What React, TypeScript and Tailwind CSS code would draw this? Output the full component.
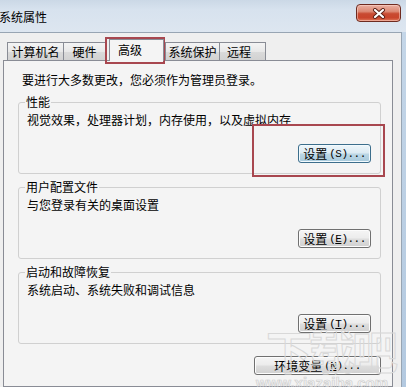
import React from "react";

function WinButton({
  className,
  primary,
  children,
}: {
  className: string;
  primary?: boolean;
  children: React.ReactNode;
}) {
  const base =
    "h-[19px] rounded-[3px] border flex items-center justify-center text-[12px] leading-[16px] text-black";
  const skin = primary
    ? "border-[#3c6e8c] bg-[linear-gradient(#eef6fa_0%,#dbeaf2_48%,#bcd7e5_52%,#a8cadc_100%)] shadow-[inset_0_0_0_1px_#f2fafe]"
    : "border-[#707070] bg-[linear-gradient(#f5f5f5_0%,#ececec_48%,#dedede_52%,#d0d0d0_100%)] shadow-[inset_0_0_0_1px_#fcfcfc]";
  return <div className={`${base} ${skin} ${className}`}>{children}</div>;
}

function Acc({ text, letter, underline }: { text: string; letter: string; underline?: boolean }) {
  return (
    <span className="flex items-center">
      <span>{text}</span>
      <span className="ml-[2px] font-['Liberation_Mono',monospace] text-[11px] tracking-[-0.5px]">
        (
        {underline ? <u>{letter}</u> : letter}
        )...
      </span>
    </span>
  );
}

function Group({
  title,
  desc,
  className,
  children,
}: {
  title: string;
  desc: string;
  className?: string;
  children: React.ReactNode;
}) {
  return (
    <fieldset
      className={`border border-[#d0d0d0] rounded-[3px] pl-[8px] pr-[9px] pb-[10px] ${className ?? ""}`}
    >
      <legend className="-ml-[2px] px-[1px] leading-[16px]">{title}</legend>
      <div className="mt-[2px] leading-[16px]">{desc}</div>
      <div className="mt-[16px] flex justify-end">{children}</div>
    </fieldset>
  );
}

export default function App() {
  const tab =
    "h-[18px] border-t border-[#898c95] bg-[linear-gradient(#f4f4f4_0%,#e8e8e8_50%,#dadada_52%,#d2d2d2_100%)] leading-[16px] flex items-center";
  return (
    <div className="relative w-[406px] h-[387px] overflow-hidden flex flex-col bg-[#f0f0f0] font-['Noto_Sans_CJK_SC','Noto_Sans',sans-serif] text-[12px] leading-[16px] text-black">
      {/* Title bar */}
      <div className="h-[32px] shrink-0 flex items-center justify-between bg-[linear-gradient(#cbd8e6_0%,#d7e2ee_30%,#dde6f0_100%)]">
        <span className="-ml-[1px] pt-[2px] text-[12px] leading-[16px] text-black">系统属性</span>
        <div className="mr-[5px] mb-[6px] w-[45px] h-[18px] rounded-[4px] border border-[#6e2b20] flex items-center justify-center bg-[linear-gradient(#eab0a2_0%,#dd8a75_40%,#c84a31_55%,#c9452c_80%,#e07a5c_100%)] shadow-[inset_0_0_0_1px_rgba(255,220,210,0.5)]">
          <svg width="14" height="11" viewBox="0 0 14 11">
            <path d="M3 2 L11 9 M11 2 L3 9" stroke="#5a1e14" strokeWidth="4" strokeLinecap="round" />
            <path d="M3 2 L11 9 M11 2 L3 9" stroke="#ffffff" strokeWidth="2.2" strokeLinecap="round" />
          </svg>
        </div>
      </div>

      {/* Body */}
      <div className="flex flex-1 min-h-0">
        <div className="flex-1 flex flex-col border-t border-r border-[#98a5b3] bg-[#efefef]">
          {/* Tabs */}
          <div className="h-[27px] shrink-0 flex items-end pl-[7px]">
            <div className={`${tab} w-[57px] border-x justify-center`}>计算机名</div>
            <div className={`${tab} w-[42px] border-r justify-center`}>硬件</div>
            <div className="relative z-10 -mb-[1px] ml-[3px] w-[55px] h-[22px] border border-b-0 border-[#898c95] bg-[#f4f4f4] flex items-center pl-[8px] pb-[2px] leading-[16px]">
              高级
            </div>
            <div className={`${tab} ml-[1px] w-[55px] border-x justify-center`}>系统保护</div>
            <div className={`${tab} w-[46px] border-r justify-start pl-[7px]`}>远程</div>
          </div>

          {/* Panel */}
          <div className="flex-1 ml-[3px] mr-[8px] border border-[#898c95] bg-[#f4f4f4] pl-[14px] pr-[11px] pt-[11px] flex flex-col">
            <div className="ml-[4px] leading-[16px]">要进行大多数更改，您必须作为管理员登录。</div>

            <Group title="性能" desc="视觉效果，处理器计划，内存使用，以及虚拟内存" className="mt-[6px]">
              <WinButton primary className="w-[73px]">
                <Acc text="设置" letter="S" />
              </WinButton>
            </Group>

            <Group title="用户配置文件" desc="与您登录有关的桌面设置" className="mt-[5px]">
              <WinButton className="w-[73px]">
                <Acc text="设置" letter="E" underline />
              </WinButton>
            </Group>

            <Group title="启动和故障恢复" desc="系统启动、系统失败和调试信息" className="mt-[5px]">
              <WinButton className="w-[73px]">
                <Acc text="设置" letter="T" underline />
              </WinButton>
            </Group>

            <div className="mt-[12px] flex justify-end">
              <WinButton className="w-[127px]">
                <Acc text="环境变量" letter="N" underline />
              </WinButton>
            </div>
          </div>
        </div>
        <div className="w-[4px] shrink-0 bg-[linear-gradient(#c4d6e8,#b3c9e0)]" />
      </div>

      {/* Watermark */}
      <span className="pointer-events-none absolute left-[266px] top-[320px] text-[46px] leading-[58px] font-bold text-transparent [-webkit-text-stroke:1px_#d8d8d8] tracking-[-3px]">
        下载吧
      </span>
      <span className="pointer-events-none absolute left-[256px] top-[375px] font-['Liberation_Sans',sans-serif] text-[15px] leading-[16px] font-bold text-transparent [-webkit-text-stroke:0.7px_#d0d0d0]">
        www.xiazaiba.com
      </span>

      {/* Red annotation frames */}
      <div className="pointer-events-none absolute left-[105px] top-[37px] w-[60px] h-[27px] border-2 border-[#a8474f]" />
      <div className="pointer-events-none absolute left-[252px] top-[124px] w-[133px] h-[53px] border-2 border-[#a8474f]" />
    </div>
  );
}
